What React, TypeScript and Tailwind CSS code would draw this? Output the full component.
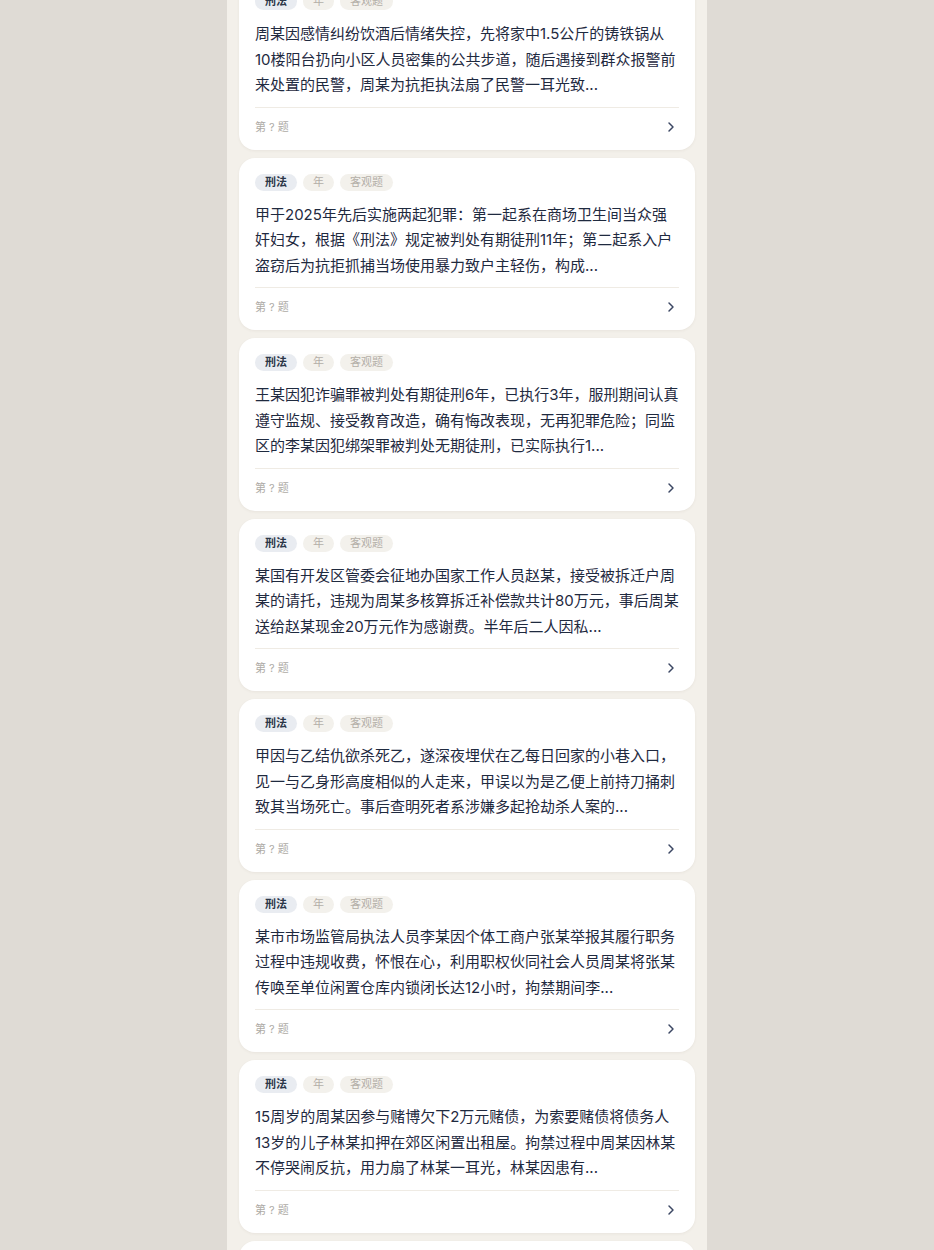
import React from "react";
import { ChevronRight } from "lucide-react";

const items = [
  "周某因感情纠纷饮酒后情绪失控，先将家中1.5公斤的铸铁锅从10楼阳台扔向小区人员密集的公共步道，随后遇接到群众报警前来处置的民警，周某为抗拒执法扇了民警一耳光致...",
  "甲于2025年先后实施两起犯罪：第一起系在商场卫生间当众强奸妇女，根据《刑法》规定被判处有期徒刑11年；第二起系入户盗窃后为抗拒抓捕当场使用暴力致户主轻伤，构成...",
  "王某因犯诈骗罪被判处有期徒刑6年，已执行3年，服刑期间认真遵守监规、接受教育改造，确有悔改表现，无再犯罪危险；同监区的李某因犯绑架罪被判处无期徒刑，已实际执行1...",
  "某国有开发区管委会征地办国家工作人员赵某，接受被拆迁户周某的请托，违规为周某多核算拆迁补偿款共计80万元，事后周某送给赵某现金20万元作为感谢费。半年后二人因私...",
  "甲因与乙结仇欲杀死乙，遂深夜埋伏在乙每日回家的小巷入口，见一与乙身形高度相似的人走来，甲误以为是乙便上前持刀捅刺致其当场死亡。事后查明死者系涉嫌多起抢劫杀人案的...",
  "某市市场监管局执法人员李某因个体工商户张某举报其履行职务过程中违规收费，怀恨在心，利用职权伙同社会人员周某将张某传唤至单位闲置仓库内锁闭长达12小时，拘禁期间李...",
  "15周岁的周某因参与赌博欠下2万元赌债，为索要赌债将债务人13岁的儿子林某扣押在郊区闲置出租屋。拘禁过程中周某因林某不停哭闹反抗，用力扇了林某一耳光，林某因患有...",
  "某公司职员甲利用职务便利，将公司财物据为己有，数额较大，案发后主动退赔全部赃款...",
];

function Card({ text }: { text: string }) {
  return (
    <div className="rounded-2xl bg-white px-4 pt-4 pb-[15px] shadow-[0_1px_3px_rgba(60,50,30,0.06)]">
      <div className="flex items-center gap-1.5">
        <span className="flex h-[17px] items-center rounded-full bg-[#e9ecf1] px-2.5 text-[11px] font-semibold text-[#2b3648]">
          刑法
        </span>
        <span className="flex h-[17px] items-center rounded-full bg-[#f3f1ec] px-2.5 text-[11px] text-[#b3afa8]">
          年
        </span>
        <span className="flex h-[17px] items-center rounded-full bg-[#f3f1ec] px-2.5 text-[11px] text-[#b3afa8]">
          客观题
        </span>
      </div>
      <p className="mt-[11px] line-clamp-3 h-[76.5px] text-[15px] leading-[25.5px] text-[#1f2a3f]">
        {text}
      </p>
      <div className="mt-[9px] border-t border-[#efebe4] pt-[11px]">
        <div className="flex h-4 items-center justify-between">
          <span className="text-[11px] leading-4 text-[#aeaba6]">第 ? 题</span>
          <ChevronRight size={16} strokeWidth={2.2} className="text-[#3b4763]" />
        </div>
      </div>
    </div>
  );
}

export default function App() {
  return (
    <div
      className="min-h-screen bg-[#dfdbd5]"
      style={{ fontFamily: '"Inter", "Noto Sans CJK SC", sans-serif' }}
    >
      <div className="mx-auto min-h-screen w-[480px] overflow-hidden bg-[#f3f0ea] px-3">
        <div className="-mt-[23px] flex flex-col gap-2">
          {items.map((t, i) => (
            <Card key={i} text={t} />
          ))}
        </div>
      </div>
    </div>
  );
}
